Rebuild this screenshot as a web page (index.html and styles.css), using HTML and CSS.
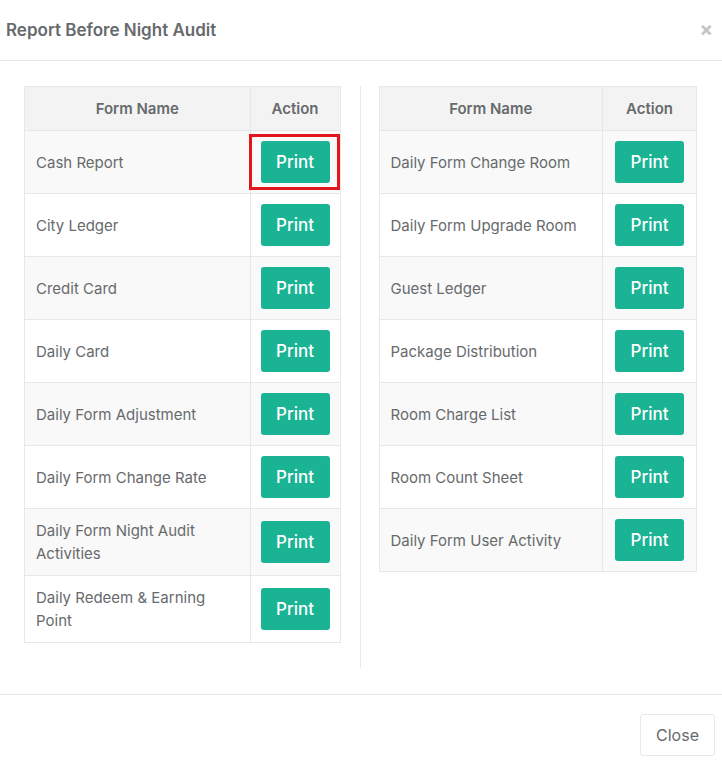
FILE: index.html
```html
<!DOCTYPE html>
<html>

<head>
    <title>Report Before Night Audit</title>
    <link rel="stylesheet" href="styles.css">
</head>

<body>
    <div class="modal">
        <div class="modal-header">
            <h4 class="modal-title">Report Before Night Audit</h4>
            <span class="close">&times;</span>
        </div>

        <div class="modal-body">
            <div class="col col-left">
                <table class="report-table">
                    <tr>
                        <th>Form Name</th>
                        <th class="col-action">Action</th>
                    </tr>
                    <tr>
                        <td>Cash Report</td>
                        <td class="col-action marked"><button class="btn-print">Print</button><span class="mark"></span></td>
                    </tr>
                    <tr>
                        <td>City Ledger</td>
                        <td class="col-action"><button class="btn-print">Print</button></td>
                    </tr>
                    <tr>
                        <td>Credit Card</td>
                        <td class="col-action"><button class="btn-print">Print</button></td>
                    </tr>
                    <tr>
                        <td>Daily Card</td>
                        <td class="col-action"><button class="btn-print">Print</button></td>
                    </tr>
                    <tr>
                        <td>Daily Form Adjustment</td>
                        <td class="col-action"><button class="btn-print">Print</button></td>
                    </tr>
                    <tr>
                        <td>Daily Form Change Rate</td>
                        <td class="col-action"><button class="btn-print">Print</button></td>
                    </tr>
                    <tr>
                        <td>Daily Form Night Audit Activities</td>
                        <td class="col-action"><button class="btn-print">Print</button></td>
                    </tr>
                    <tr>
                        <td>Daily Redeem &amp; Earning Point</td>
                        <td class="col-action"><button class="btn-print">Print</button></td>
                    </tr>
                </table>
            </div>

            <div class="col col-right">
                <table class="report-table">
                    <tr>
                        <th>Form Name</th>
                        <th class="col-action wide">Action</th>
                    </tr>
                    <tr>
                        <td>Daily Form Change Room</td>
                        <td class="col-action"><button class="btn-print">Print</button></td>
                    </tr>
                    <tr>
                        <td>Daily Form Upgrade Room</td>
                        <td class="col-action"><button class="btn-print">Print</button></td>
                    </tr>
                    <tr>
                        <td>Guest Ledger</td>
                        <td class="col-action"><button class="btn-print">Print</button></td>
                    </tr>
                    <tr>
                        <td>Package Distribution</td>
                        <td class="col-action"><button class="btn-print">Print</button></td>
                    </tr>
                    <tr>
                        <td>Room Charge List</td>
                        <td class="col-action"><button class="btn-print">Print</button></td>
                    </tr>
                    <tr>
                        <td>Room Count Sheet</td>
                        <td class="col-action"><button class="btn-print">Print</button></td>
                    </tr>
                    <tr>
                        <td>Daily Form User Activity</td>
                        <td class="col-action"><button class="btn-print">Print</button></td>
                    </tr>
                </table>
            </div>
        </div>

        <div class="modal-footer">
            <button class="btn-close">Close</button>
        </div>
    </div>
</body>

</html>
```

FILE: styles.css
```css
body {
    margin: 0;
    font-family: Inter, "Noto Sans", sans-serif;
    background-color: #ffffff;
    color: #676a6c;
}

.modal {
    width: 722px;
}

.modal-header {
    display: flex;
    align-items: center;
    justify-content: space-between;
    height: 60px;
    padding: 0 9px 0 6px;
    border-bottom: 1px solid #e5e5e5;
}

.modal-title {
    margin: 0;
    font-size: 17px;
    font-weight: 600;
    color: #676a6c;
}

.close {
    font-size: 20px;
    font-weight: bold;
    color: #c4c4c4;
    line-height: 1;
    margin-top: -2px;
}

.modal-body {
    display: grid;
    grid-template-columns: 1fr 1fr;
    padding: 25px 25px 26px 24px;
}

.col {
    padding-bottom: 25px;
}

.col-left {
    padding-right: 19px;
    border-right: 1px solid #e7eaec;
}

.col-right {
    padding-left: 18px;
}

.report-table {
    width: 100%;
    border-collapse: collapse;
    font-size: 15px;
}

.report-table th,
.report-table td {
    border: 1px solid #e7e7e7;
    vertical-align: middle;
    padding: 10px 11px;
}

.report-table th {
    height: 23px;
    background-color: #f3f3f3;
    font-weight: 600;
    text-align: center;
}

.report-table td {
    line-height: 23px;
}

.report-table tr:nth-child(even) td {
    background-color: #f9f9f9;
}

.report-table .col-action {
    width: 69px;
    padding-left: 10px;
    padding-right: 10px;
    text-align: center;
}

.report-table .col-action.wide {
    width: 73px;
}

.btn-print {
    display: block;
    margin: 0 auto;
    width: 69px;
    height: 42px;
    border: none;
    border-radius: 3px;
    background-color: #1ab394;
    color: #ffffff;
    font-family: Inter, "Noto Sans", sans-serif;
    font-size: 17px;
    font-weight: 500;
    cursor: pointer;
}

.marked {
    position: relative;
}

.mark {
    position: absolute;
    top: 3px;
    bottom: 3px;
    left: -2px;
    right: 0;
    border: 3px solid #e3161d;
}

.modal-footer {
    display: flex;
    justify-content: flex-end;
    padding: 19px 7px 12px 0;
    border-top: 1px solid #e5e5e5;
}

.btn-close {
    width: 75px;
    height: 42px;
    background-color: #ffffff;
    border: 1px solid #e7eaec;
    border-radius: 3px;
    color: #676a6c;
    font-family: Inter, "Noto Sans", sans-serif;
    font-size: 16px;
}
```
